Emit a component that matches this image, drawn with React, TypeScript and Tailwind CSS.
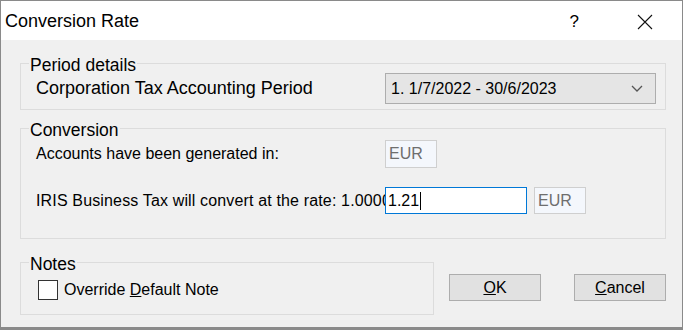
import React from "react";

const font = { fontFamily: '"Liberation Sans", Arial, sans-serif' };

const GroupBox = ({
  label,
  className,
  children,
}: {
  label: string;
  className: string;
  children: React.ReactNode;
}) => (
  <fieldset className={`border border-[#dcdcdc] pl-[8px] ${className}`}>
    <legend className="px-[1px] pt-[4px] leading-[18px] text-[17.5px] text-black">{label}</legend>
    {children}
  </fieldset>
);

export default function App() {
  return (
    <div
      className="w-[683px] h-[330px] bg-[#f0f0f0] border border-[#8a8a8a] border-b-[3px] flex flex-col text-[16px] text-black"
      style={font}
    >
      {/* Title bar */}
      <div className="h-[39px] bg-white flex items-center shrink-0 pt-[2px]">
        <span className="ml-[4px] text-[18px] text-black">Conversion Rate</span>
        <span className="ml-auto mr-[58px] text-[17px] text-black">?</span>
        <svg width="16" height="16" viewBox="0 0 16 16" className="mr-[29px]">
          <path d="M1 1L15 15M15 1L1 15" stroke="#111" strokeWidth="1.1" />
        </svg>
      </div>

      <div className="flex-1 pl-[19px] pr-[16px] pt-[12px]">
        <GroupBox label="Period details" className="h-[58px] pr-[9px]">
          <div className="flex items-center -mt-[1px] pl-[7px]">
            <span className="text-[18px]">Corporation Tax Accounting Period</span>
            <div className="ml-auto w-[271px] h-[31px] bg-[#e5e5e5] border border-[#adadad] flex items-center pl-[5px] pr-[12px]">
              <span>1. 1/7/2022 - 30/6/2023</span>
              <svg width="12" height="7" viewBox="0 0 12 7" className="ml-auto">
                <path d="M1 1L6 6L11 1" stroke="#555" strokeWidth="1.3" fill="none" />
              </svg>
            </div>
          </div>
        </GroupBox>

        <GroupBox label="Conversion" className="mt-[7px] h-[122px]">
          <div className="flex items-center h-[28px] mt-[1px] pl-[7px]">
            <span className="w-[349px]">Accounts have been generated in:</span>
            <div className="w-[52px] h-[28px] border border-[#cfcfcf] bg-[#f4f7fc] text-[#6e6e6e] flex items-center pl-[3px]">
              EUR
            </div>
          </div>
          <div className="flex items-center h-[27px] mt-[19px] pl-[7px]">
            <span className="w-[349px] overflow-hidden whitespace-nowrap tracking-[0.15px]">
              IRIS Business Tax will convert at the rate: 1.0000
            </span>
            <div className="w-[142px] h-[27px] border border-[#0078d7] bg-white flex items-center pl-[2px]">
              1.21<span className="inline-block w-[1px] h-[18px] bg-black ml-[1px]" />
            </div>
            <div className="ml-[7px] w-[52px] h-[27px] border border-[#cfcfcf] bg-[#f4f7fc] text-[#6e6e6e] flex items-center pl-[3px]">
              EUR
            </div>
          </div>
        </GroupBox>

        <div className="flex mt-[12px]">
          <GroupBox label="Notes" className="w-[414px] h-[64px]">
            <label className="flex items-center gap-[6px] mt-[5px] pl-[9px]">
              <span className="w-[20px] h-[20px] border border-[#333] bg-white" />
              <span>
                Override <u>D</u>efault Note
              </span>
            </label>
          </GroupBox>
          <div className="flex gap-[33px] ml-[15px] mt-[23px]">
            <button className="w-[92px] h-[27px] bg-[#e1e1e1] border border-[#adadad] text-black">
              <u>O</u>K
            </button>
            <button className="w-[92px] h-[27px] bg-[#e1e1e1] border border-[#adadad] text-black">
              <u>C</u>ancel
            </button>
          </div>
        </div>
      </div>
    </div>
  );
}
